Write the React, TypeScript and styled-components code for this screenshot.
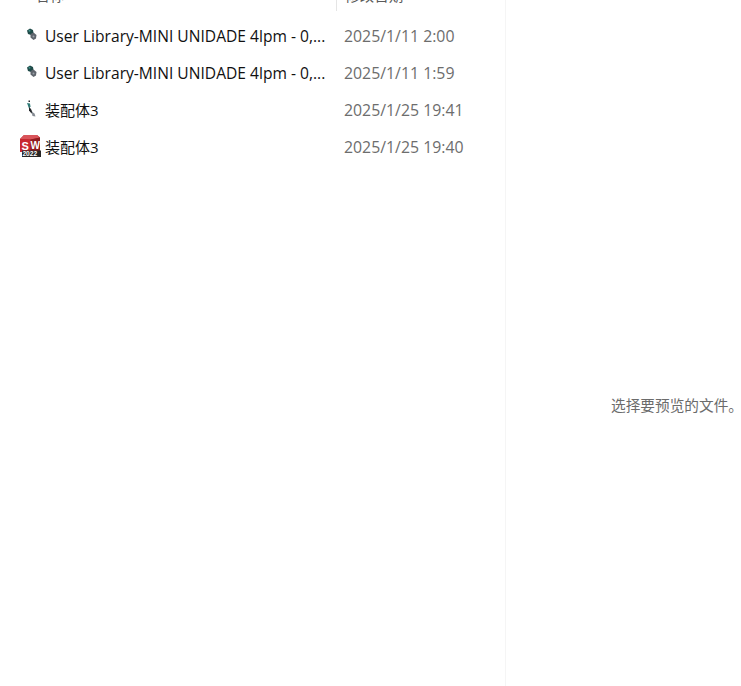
import styled, { createGlobalStyle } from "styled-components";

const GlobalStyle = createGlobalStyle`
  html, body {
    margin: 0;
    padding: 0;
    overflow: hidden;
    background: #fff;
  }
  body {
    font-family: "Open Sans", "Noto Sans CJK SC", sans-serif;
  }
`;

const Window = styled.div`
  display: flex;
  width: 741px;
  height: 686px;
  overflow: hidden;
`;

const ListPane = styled.div`
  flex: 0 0 506px;
  box-sizing: border-box;
  border-right: 1px solid #f5f5f5;
`;

const HeaderRow = styled.div`
  display: flex;
  height: 11px;
  overflow: hidden;
`;

const HeaderCell = styled.div<{ $width: number; $pad: number; $divider?: boolean }>`
  box-sizing: border-box;
  width: ${(p) => p.$width}px;
  padding-left: ${(p) => p.$pad}px;
  border-right: ${(p) => (p.$divider ? "1px solid #e5e5e5" : "none")};
  font-size: 14.6px;
  line-height: 20px;
  color: #5a5a5a;
  margin-top: -15px;
  height: 26px;
`;

const Rows = styled.div`
  display: flex;
  flex-direction: column;
  padding-top: 6px;
`;

const Row = styled.div`
  display: flex;
  align-items: center;
  height: 37px;
`;

const NameCell = styled.div`
  display: flex;
  align-items: center;
  flex: 0 0 337px;
  box-sizing: border-box;
  padding-left: 20px;
`;

const IconSlot = styled.div`
  flex: 0 0 20px;
  width: 20px;
  height: 20px;
  margin-right: 5px;
  margin-top: 1px;
`;

const FileName = styled.span<{ $cjk?: boolean }>`
  font-size: ${(p) => (p.$cjk ? 15 : 15.6)}px;
  color: #111;
  white-space: nowrap;
`;

const DateCell = styled.span`
  padding-left: 7px;
  font-size: 15.85px;
  color: #6d6d6d;
  white-space: nowrap;
`;

const PreviewPane = styled.div`
  flex: 0 0 342px;
  display: flex;
  align-items: center;
  justify-content: center;
`;

const PreviewHint = styled.span`
  font-size: 14.67px;
  color: #6b6b6b;
  margin-top: 123px;
  white-space: nowrap;
`;

const PartIcon = () => (
  <svg width="20" height="20" viewBox="0 0 20 20">
    <path d="M7 4.5L10 2.5l3 1.5.5 3-2.5 2-3-1z" fill="#1f4a48" />
    <path d="M10.5 8l3-1.5 3 2.5-.5 3.5-2.5 1.5-3-2.5z" fill="#5f656d" />
    <circle cx="9.5" cy="4.8" r="1" fill="#3f8f88" />
    <circle cx="13.5" cy="10.5" r="1" fill="#9aa0a8" />
  </svg>
);

const AssemblyIcon = () => (
  <svg width="20" height="20" viewBox="0 0 20 20">
    <path d="M8.5 0.5l1.5 0v1.5h-1.5z" fill="#26292d" />
    <path d="M7 3l3 .5.5 3-1.5 2z" fill="#2f7a76" />
    <path d="M9 7l2 2 1.5 3.5-1 1-2.5-3z" fill="#22262a" />
    <path d="M11.5 11.5l3 2 1 3-3-.5z" fill="#858b93" />
  </svg>
);

const SolidworksIcon = () => (
  <svg width="21" height="22" viewBox="0 0 21 22" style={{ marginTop: -2, display: "block" }}>
    <path d="M0 4L4 0h13l3 2.5V17H0z" fill="#b5262d" />
    <path d="M4 0h13l3 2.5-9 2L0 4z" fill="#d9545a" />
    <path d="M0 4l10.5.5V17H0z" fill="#c9282f" />
    <path d="M10.5 4.5l9.5-2V17h-9.5z" fill="#8f1b20" />
    <text x="1.5" y="14.5" fontFamily="'Liberation Sans', sans-serif" fontWeight="700" fontSize="11" fill="#fff">
      S
    </text>
    <text x="10.4" y="13.5" fontFamily="'Liberation Sans', sans-serif" fontWeight="700" fontSize="10" fill="#fff">
      W
    </text>
    <rect x="2" y="15.5" width="19" height="6.5" fill="#262626" />
    <text x="2.4" y="21.3" fontFamily="'Liberation Sans', sans-serif" fontWeight="700" fontSize="6.6" fill="#fff">
      2022
    </text>
  </svg>
);

const files = [
  { name: "User Library-MINI UNIDADE 4lpm - 0,...", date: "2025/1/11 2:00", icon: <PartIcon /> },
  { name: "User Library-MINI UNIDADE 4lpm - 0,...", date: "2025/1/11 1:59", icon: <PartIcon /> },
  { name: "装配体3", date: "2025/1/25 19:41", icon: <AssemblyIcon />, cjk: true },
  { name: "装配体3", date: "2025/1/25 19:40", icon: <SolidworksIcon />, cjk: true },
];

export default function App() {
  return (
    <>
      <GlobalStyle />
      <Window>
        <ListPane>
          <HeaderRow>
            <HeaderCell $width={337} $pad={35} $divider>
              名称
            </HeaderCell>
            <HeaderCell $width={168} $pad={8}>
              修改日期
            </HeaderCell>
          </HeaderRow>
          <Rows>
            {files.map((f) => (
              <Row key={f.date}>
                <NameCell>
                  <IconSlot>{f.icon}</IconSlot>
                  <FileName $cjk={f.cjk}>{f.name}</FileName>
                </NameCell>
                <DateCell>{f.date}</DateCell>
              </Row>
            ))}
          </Rows>
        </ListPane>
        <PreviewPane>
          <PreviewHint>选择要预览的文件。</PreviewHint>
        </PreviewPane>
      </Window>
    </>
  );
}
